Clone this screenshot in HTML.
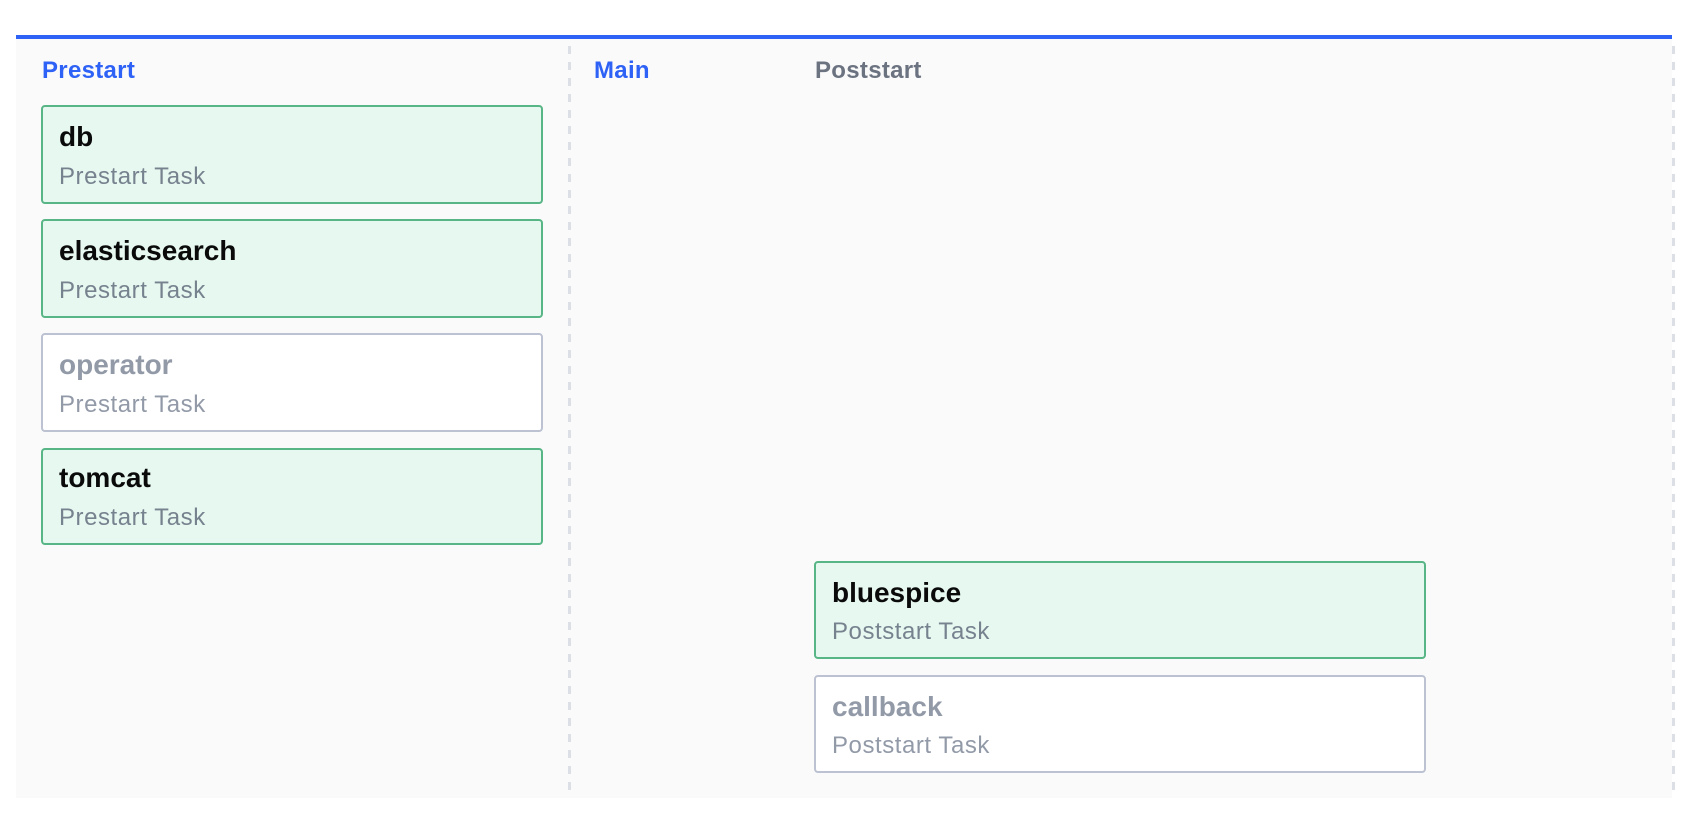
<!DOCTYPE html>
<html><head><meta charset="utf-8"><style>
html,body{margin:0;padding:0;width:1690px;height:830px;background:#fff;overflow:hidden;font-family:"Liberation Sans",sans-serif}
.p{position:absolute;left:16px;top:35px;width:1656px;height:763px;background:#fafafa;border-top:4px solid #2e62f6;box-sizing:border-box}
.d{position:absolute;top:46px;width:3px;height:752px;background:repeating-linear-gradient(to bottom,#dcdfe6 0 8px,transparent 8px 16px)}
.h{position:absolute;top:57px;font-size:24px;line-height:28px;font-weight:bold;letter-spacing:.3px;color:#2e62f6;white-space:nowrap}
.c{position:absolute;box-sizing:border-box;border:2px solid #58b585;border-radius:4px;background:#e7f8f0}
.c.x{border-color:#bcc2d2;background:#fff}
.t{position:absolute;left:16px;top:15px;font-size:28px;line-height:30px;font-weight:bold;color:#0a0a0a;white-space:nowrap}
.s{position:absolute;left:16px;top:55px;font-size:24px;line-height:28px;letter-spacing:.55px;color:#77828f;white-space:nowrap}
.x .t{color:#929aa8}.x .s{color:#929aa8}
</style></head><body>
<div class="p"></div>
<div class="d" style="left:568px"></div>
<div class="d" style="left:1672px"></div>
<div class="h" style="left:42px">Prestart</div>
<div class="h" style="left:594px">Main</div>
<div class="h" style="left:815px;color:#6b7280">Poststart</div>
<div class="c" style="left:41px;top:105px;width:502px;height:99px"><div class="t">db</div><div class="s" style="top:56px">Prestart Task</div></div>
<div class="c" style="left:41px;top:219px;width:502px;height:99px"><div class="t">elasticsearch</div><div class="s" style="top:56px">Prestart Task</div></div>
<div class="c x" style="left:41px;top:333px;width:502px;height:99px"><div class="t">operator</div><div class="s" style="top:56px">Prestart Task</div></div>
<div class="c" style="left:41px;top:448px;width:502px;height:97px"><div class="t" style="top:13px">tomcat</div><div class="s" style="top:54px">Prestart Task</div></div>
<div class="c" style="left:814px;top:561px;width:612px;height:98px"><div class="t">bluespice</div><div class="s">Poststart Task</div></div>
<div class="c x" style="left:814px;top:675px;width:612px;height:98px"><div class="t">callback</div><div class="s">Poststart Task</div></div>
</body></html>
